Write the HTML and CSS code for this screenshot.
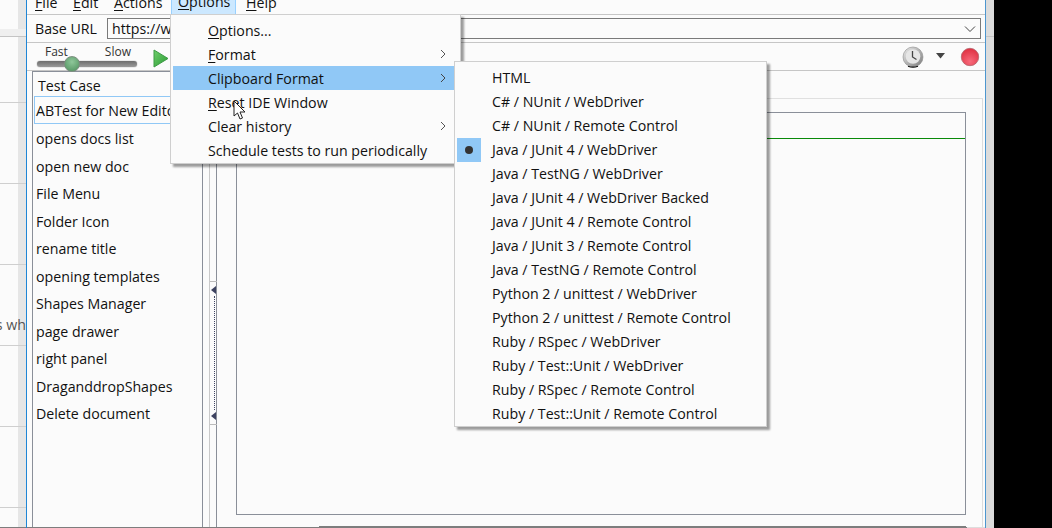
FILE: index.html
```html
<!DOCTYPE html>
<html lang="en">
<head>
<meta charset="utf-8">
<title>Selenium IDE</title>
<link rel="stylesheet" href="styles.css">
</head>
<body>
<div class="screen">
  <div class="page-strip">
    <div class="strip-top"></div>
    <div class="strip-row short"></div>
    <div class="strip-row"></div>
    <div class="strip-row"></div>
    <div class="strip-row text-row"><span>s wh</span></div>
    <div class="strip-row"></div>
    <div class="strip-row"></div>
  </div>

  <div class="window">
    <div class="menubar">
      <span class="menubar-item item-file"><u>F</u>ile</span>
      <span class="menubar-item item-edit"><u>E</u>dit</span>
      <span class="menubar-item item-actions"><u>A</u>ctions</span>
      <span class="menubar-item item-options"><u>O</u>ptions</span>
      <span class="menubar-item item-help"><u>H</u>elp</span>
    </div>

    <div class="url-row">
      <span class="url-label">Base URL</span>
      <div class="url-box">
        <span class="url-text">https://www.draw.io/</span>
        <svg class="chevron" width="12" height="8" viewBox="0 0 12 8"><path d="M1 1.500l5 5 5-5" fill="none" stroke="#444" stroke-width="1"/></svg>
      </div>
    </div>

    <div class="toolbar">
      <div class="speed">
        <div class="speed-labels"><span>Fast</span><span>Slow</span></div>
        <div class="speed-track"><span class="speed-thumb"></span></div>
      </div>
      <svg class="play" width="16" height="19" viewBox="0 0 16 19">
        <defs><linearGradient id="pg" x1="0" y1="0" x2="1" y2="1"><stop offset="0" stop-color="#6fcf6a"/><stop offset="1" stop-color="#2a9a35"/></linearGradient></defs>
        <path d="M1 1l14 8.500-14 8.500z" fill="url(#pg)" stroke="#3d9a45" stroke-width="1"/>
      </svg>
      <div class="toolbar-right">
        <svg class="clock" width="22" height="22" viewBox="0 0 22 22">
          <defs><linearGradient id="cg" x1="0" y1="0" x2="1" y2="1"><stop offset="0" stop-color="#ececec"/><stop offset="1" stop-color="#7a7a7a"/></linearGradient></defs>
          <circle cx="11" cy="11" r="10" fill="url(#cg)" stroke="#8a8a8a" stroke-width=".6"/>
          <circle cx="11" cy="10.500" r="7.300" fill="#e6e6e6"/>
          <path d="M10.500 5v6l4 2.500" fill="none" stroke="#444" stroke-width="1.300"/>
          <path d="M6 20.300q5 1.800 10 0" fill="none" stroke="#111" stroke-width="1.200"/>
        </svg>
        <svg class="caret" width="9" height="6" viewBox="0 0 9 6"><path d="M0 0h9l-4.500 5.500z" fill="#444"/></svg>
        <svg class="record" width="20" height="20" viewBox="0 0 20 20">
          <defs><radialGradient id="rg" cx=".5" cy=".75" r=".75"><stop offset="0" stop-color="#f76a7b"/><stop offset="1" stop-color="#df2f40"/></radialGradient></defs>
          <circle cx="10" cy="10" r="8.700" fill="url(#rg)" stroke="#b2656c" stroke-width=".8"/>
        </svg>
      </div>
    </div>

    <div class="workspace">
      <div class="case-panel">
        <div class="case-head">Test Case</div>
        <div class="case-row selected">ABTest for New Editor</div>
        <div class="case-row">opens docs list</div>
        <div class="case-row">open new doc</div>
        <div class="case-row">File Menu</div>
        <div class="case-row">Folder Icon</div>
        <div class="case-row">rename title</div>
        <div class="case-row">opening templates</div>
        <div class="case-row">Shapes Manager</div>
        <div class="case-row">page drawer</div>
        <div class="case-row">right panel</div>
        <div class="case-row">DraganddropShapes</div>
        <div class="case-row">Delete document</div>
      </div>

      <div class="splitter">
        <div class="grip">
          <svg width="5" height="8" viewBox="0 0 5 8"><path d="M5 0v8L0 4z" fill="#3d4260"/></svg>
          <span class="grip-dots"></span>
          <svg width="5" height="8" viewBox="0 0 5 8"><path d="M5 0v8L0 4z" fill="#3d4260"/></svg>
        </div>
      </div>

      <div class="editor-pane">
        <div class="tabs-space"></div>
        <div class="tab-frame">
          <div class="command-box">
            <div class="command-head"></div>
          </div>
        </div>
      </div>
    </div>
    <div class="bottom-thick"></div>

    <div class="menu options-menu">
      <div class="menu-item"><span><u>O</u>ptions...</span></div>
      <div class="menu-item"><span><u>F</u>ormat</span><svg class="arrow" width="6" height="10" viewBox="0 0 6 10"><path d="M1 1l4 4-4 4" fill="none" stroke="#555"/></svg></div>
      <div class="menu-item active"><span>Clipboard Format</span><svg class="arrow" width="6" height="10" viewBox="0 0 6 10"><path d="M1 1l4 4-4 4" fill="none" stroke="#444"/></svg></div>
      <div class="menu-item"><span><u>R</u>eset IDE Window</span></div>
      <div class="menu-item"><span>Clear history</span><svg class="arrow" width="6" height="10" viewBox="0 0 6 10"><path d="M1 1l4 4-4 4" fill="none" stroke="#555"/></svg></div>
      <div class="menu-item"><span>Schedule tests to run periodically</span></div>
    </div>

    <div class="menu format-menu">
      <div class="format-item">HTML</div>
      <div class="format-item">C# / NUnit / WebDriver</div>
      <div class="format-item">C# / NUnit / Remote Control</div>
      <div class="format-item checked">Java / JUnit 4 / WebDriver</div>
      <div class="format-item">Java / TestNG / WebDriver</div>
      <div class="format-item">Java / JUnit 4 / WebDriver Backed</div>
      <div class="format-item">Java / JUnit 4 / Remote Control</div>
      <div class="format-item">Java / JUnit 3 / Remote Control</div>
      <div class="format-item">Java / TestNG / Remote Control</div>
      <div class="format-item">Python 2 / unittest / WebDriver</div>
      <div class="format-item">Python 2 / unittest / Remote Control</div>
      <div class="format-item">Ruby / RSpec / WebDriver</div>
      <div class="format-item">Ruby / Test::Unit / WebDriver</div>
      <div class="format-item">Ruby / RSpec / Remote Control</div>
      <div class="format-item">Ruby / Test::Unit / Remote Control</div>
    </div>

    <svg class="cursor" width="14" height="21" viewBox="0 0 14 21"><path d="M1 1v15l3.500-3 2.500 6 2.500-1-2.500-6h5z" fill="#fff" stroke="#222" stroke-width="1"/></svg>
  </div>

  <div class="right-strip"><div class="right-strip-top"></div></div>
  <div class="black"></div>
</div>
</body>
</html>
```

FILE: styles.css
```css
* { box-sizing: border-box; }
html, body { margin: 0; padding: 0; }
body { width: 1052px; height: 528px; overflow: hidden; background: #000; font-family: "Open Sans", "Liberation Sans", sans-serif; font-size: 14.2px; color: #111; }
u { text-underline-offset: 2px; text-decoration-thickness: 1px; }

.screen { display: flex; width: 1052px; height: 528px; }

/* page behind the window */
.page-strip { width: 26px; height: 528px; flex: none; background: linear-gradient(90deg, #fbfbfb 18px, #e6e6e6 18px); overflow: hidden; border-bottom: 1px solid #7d7d7d; }
.strip-top { height: 37px; background: linear-gradient(#0000 29px, #efefef 29px); border-bottom: 1px solid #c4c4c4; }
.strip-row { height: 81px; border-bottom: 1px solid #cfcfcf; display: flex; align-items: center; justify-content: flex-end; white-space: nowrap; }
.strip-row.short { height: 66px; }
.text-row span { color: #555; padding-top: 38px; }

/* window */
.window { position: relative; width: 960px; height: 528px; flex: none; background: #fbfbfb; border-left: 1px solid #1f86d6; border-right: 1px solid #4d96cf; display: flex; flex-direction: column; }
.menubar { height: 15px; flex: none; position: relative; border-bottom: 1px solid #c6c6c6; overflow: hidden; display: flex; align-items: flex-end; padding-left: 8px; gap: 0; }
.menubar-item { line-height: 24px; height: 24px; margin-bottom: -1px; flex: none; }
.item-file { width: 38px; }
.item-edit { width: 41px; }
.item-actions { width: 57px; margin-right: 7px; }
.item-options { width: 65px; margin-left: -7px; padding-left: 7px; background: #cce8ff; border: 1px solid #99d1ff; border-top: 0; line-height: 23px; margin-right: 10px; padding-left: 6px; height: 25px; margin-bottom: -1px; }
.item-help { width: 40px; }

.url-row { height: 28px; flex: none; display: flex; align-items: center; padding: 0 4px 0 8px; border-bottom: 1px solid #c6c6c6; }
.url-label { width: 72px; flex: none; }
.url-box { flex: 1; height: 21px; border: 1px solid #7a7a7a; background: #fbfbfb; display: flex; align-items: center; justify-content: space-between; padding: 0 4px 0 4px; }

.toolbar { height: 28px; flex: none; display: flex; align-items: center; padding: 0 5px 0 10px; border-bottom: 1px solid #c6c6c6; }
.speed { width: 100px; flex: none; }
.speed-labels { display: flex; justify-content: space-between; padding: 0 6px 0 8px; font-size: 12px; line-height: 12px; color: #333; margin-bottom: 0; margin-top: -1px; }
.speed-track { position: relative; height: 6px; margin-top: 3px; border-radius: 3px; background: linear-gradient(#6d6d6d, #9a9a9a); box-shadow: 0 0 1px #555; }
.speed-thumb { position: absolute; left: 27px; top: -5px; width: 16px; height: 16px; border-radius: 50%; background: radial-gradient(circle at 50% 35%, #8fc79a, #4d8f5c); border: 1px solid #7d8f80; }
.play { flex: none; margin-left: 16px; margin-top: 3px; }
.toolbar-right { margin-left: auto; display: flex; align-items: center; }
.clock { flex: none; margin-right: 12px; }
.caret { flex: none; margin-right: 15px; margin-top: -2px; }
.record { flex: none; }

.workspace { flex: 1; min-height: 0; display: flex; padding-left: 5px; border-bottom: 1px solid #7d7d7d; border-image: linear-gradient(90deg, #7d7d7d 939px, #dddddd 939px) 1; }
.bottom-thick { position: absolute; left: 292px; width: 647px; bottom: 0; height: 2px; background: #7d7d7d; }
.case-panel { width: 171px; flex: none; border: 1px solid #8a8f99; border-bottom: 0; padding-left: 1px; }
.case-head { height: 25px; line-height: 28px; padding-left: 4px; }
.case-row { height: 27.500px; line-height: 27px; padding-left: 2px; white-space: nowrap; overflow: hidden; }
.case-row.selected { height: 28px; margin-top: -1px; margin-bottom: 1.100px; border: 1px solid #90c8f6; margin-right: 1px; padding-left: 1px; line-height: 27px; }

.splitter { width: 14px; flex: none; border-right: 1px solid #8a8f99; position: relative; padding-top: 210px; padding-left: 6px; }
.grip { width: 8px; height: 144px; border-left: 1px solid #c9c9c9; border-top: 1px solid #bbb; border-bottom: 1px solid #bbb; display: flex; flex-direction: column; align-items: center; justify-content: space-between; padding: 4px 0; }
.grip-dots { flex: 1; width: 2px; margin: 2px 0; border-left: 1px dotted #3d4260; margin-left: 3px; }
.splitter::before { content: ""; position: absolute; left: 6px; top: 0; bottom: 0; border-left: 1px solid #c9c9c9; }

.editor-pane { flex: 1; min-width: 0; display: flex; flex-direction: column; padding-right: 2px; }
.tabs-space { height: 27px; flex: none; }
.tab-frame { flex: 1; min-height: 0; border-top: 1px solid #e0e0e0; border-right: 1px solid #dcdcdc; padding: 13px 16px 12px 19px; }
.command-box { height: 100%; border: 1px solid #8a8f99; background: #fbfbfb; }
.command-head { height: 26px; border-bottom: 1px solid #0a8a0a; }

/* menus */
.menu { position: absolute; background: #fbfbfb; border: 1px solid #cfcfcf; box-shadow: 3px 3px 2px rgba(0, 0, 0, .38); padding: 2px; z-index: 2; }
.options-menu { left: 143px; top: 14px; width: 291px; height: 150px; padding: 3px 2px 2px 1px; }
.menu-item { height: 24px; display: flex; align-items: center; justify-content: space-between; padding: 0 12px 0 36px; white-space: nowrap; }
.menu-item.active { background: #90c8f6; margin-left: 1px; padding-left: 35px; margin-right: -2px; padding-right: 14px; }
.format-menu { left: 427px; top: 61px; width: 313px; height: 366px; padding: 4px 2px 2px; z-index: 3; }
.format-item { height: 24px; line-height: 24px; padding-left: 35px; white-space: nowrap; position: relative; }
.format-item.checked::before { content: ""; position: absolute; left: 0; top: 0; width: 24px; height: 24px; background: #90c8f6; }
.format-item.checked::after { content: ""; position: absolute; left: 8px; top: 8px; width: 8px; height: 8px; border-radius: 50%; background: #333; }
.cursor { position: absolute; left: 206px; top: 100px; z-index: 4; }

.right-strip { width: 8px; height: 528px; flex: none; background: #dcdcdc; }
.right-strip-top { height: 37px; border-bottom: 1px solid #c4c4c4; }
.black { flex: 1; background: #000; }
```
